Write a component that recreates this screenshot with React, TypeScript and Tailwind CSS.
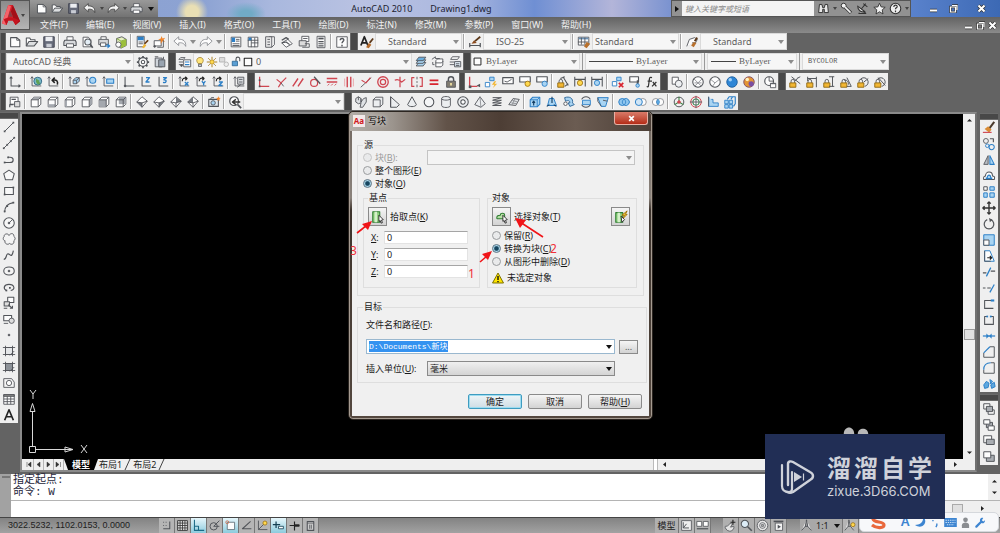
import React from "react";

type Shape = [d: string, stroke?: string, fill?: string, width?: number];

const K = "#515459";
const B = "#2b7fc7";
const L = "#a9d4f2";
const R = "#cf4550";
const Y = "#f2b632";
const G = "#8b8e92";
const W = "#fdfdfd";
const N = "none";

const circle = (x: number, y: number, r: number) =>
  `M${x - r} ${y}a${r} ${r} 0 1 0 ${2 * r} 0a${r} ${r} 0 1 0 ${-2 * r} 0z`;
const box = (x: number, y: number, w: number, h: number) => `M${x} ${y}h${w}v${h}h${-w}z`;

const UNDO = "M6.500 2L1 7l5.500 5V9c3-.5 6 0 8 4 .5-6-3-8.500-8-8z";
const REDO = "M9.500 2L15 7l-5.500 5V9c-3-.5-6 0-8 4-.5-6 3-8.500 8-8z";

const cube = (face: string): Shape[] => [
  ["M2.500 5.500l3-3h8v8l-3 3h-8z", K, W],
  [face, N, "#a4a8ae"],
  ["M2.500 5.500h8v8M10.500 5.500l3-3", K, N],
];
const iso = (face: string): Shape[] => [
  ["M8 2l6 5-6 7-6-6z", K, W],
  [face, N, "#777b81"],
  ["M2 8l6 1 6-2M8 9v5", K, N],
];
const axes: Shape = ["M3.500 2v10.500H14M2 4l1.500-2L5 4", K, N];
const lock: Shape[] = [
  ["M3.500 9V7a2 2 0 0 1 4 0v2", K, N],
  [box(2, 9, 7, 5), "#8c6510", Y],
];
const layers: Shape[] = [
  ["M2.500 12.500l3-4h8l-3 4z", K, L],
  ["M2.500 9.500l3-4h8l-3 4z", K, L],
  ["M2.500 6.500l3-4h8l-3 4z", K, "#6aaede"],
];
const sheet: Shape = ["M3.500 2.500h6l3 3v8h-9z", K, W];

const icons: Record<string, Shape[]> = {
  new: [["M3 3h7l3.500 3v7.500H3z", K, W, 1.2], ["M10 3v3h3.500", K, N]],
  open: [["M1.500 12.500v-9h4l1 2h5v2", K, W, 1.2], ["M1.500 12.500l3-5h10l-4 5z", K, "#dcdee0", 1.2]],
  save: [[box(2, 2, 12, 12), "#3b3f4c", "#666b7a"], [box(4, 2, 8, 5), N, "#eceef2"], [box(5, 10, 6, 4), N, "#c9ccd4"]],
  print: [["M4.500 6V2h7v4", K, W], ["M2 6h12l1 2v4H1V8z", K, "#d7d9dc", 1.2], [box(4, 10, 8, 4), K, W]],
  preview: [sheet, [circle(9, 8, 3.5), K, "#e3edf5", 1.2], ["M11.500 10.500l3 4", K, N, 2]],
  publish: [["M4.500 5V2h6v3", K, W], ["M2 5h11v6H2z", K, "#d7d9dc"], [box(4, 9, 6, 4), K, W], ["M9 12h3V9.500l3.500 3-3.500 3V13H9z", N, B]],
  dwf: [["M3 4l6-2 5 3v7l-6 3-5-3z", K, "#e7f1c2"], ["M3 4l5 3 6-2M8 7v7", "#77a133", N], ["M8 7l6-2v7l-6 3z", N, "#9cbf3c"], [circle(5, 11, 3), K, W]],
  match: [[box(2.5, 1.5, 8, 12), K, W], [box(3, 2, 7, 4), N, B], ["M4 8h5M4 10h5", K, N], ["M8 14l3-4 2 2-3 3z", N, Y], ["M11 10l4-4", "#6b3d14", N, 2]],
  block: [[box(2.5, 6.5, 8, 6), K, W], [circle(3, 13, 1), K, K], ["M11 1l1 3 3-1-2 3 2 2-3-1-2 3 0-4-3-1 3-1z", N, "#f0842a"], ["M13 6v8H6", K, N]],
  undo: [[UNDO, G, W]],
  redo: [[REDO, G, W]],
  undoL: [[UNDO, "#3e3e3e", "#f3f3f3"]],
  redoL: [[REDO, "#3e3e3e", "#f3f3f3"]],
  props: [[box(2.5, 2.5, 11, 11), K, W], [box(3, 3, 4, 5), N, B], ["M8 5h4M8 7h4M4 10h8M4 12h8", K, N]],
  center: [[box(2.5, 2.5, 11, 11), K, W], ["M2 6h12M6 3v11M10 3v11M6 9h8", K, N], [box(3, 3, 3, 3), N, B]],
  palette: [["M7 2h6v9l-3 3", K, W], [box(3, 2, 7, 12), K, "#e8e8e8"], ["M5 5h3M5 8h3M5 11h3", K, N]],
  sheets: [["M2 9l7-4 5 5-7 4z", K, W], ["M2 6l5-3 3 2M2 9l5-1 4 3", K, N, 1.4]],
  markup: [[box(5.5, 1.5, 8, 6), K, W], [box(2.5, 6.5, 8, 6), K, "#dcdcdc"], ["M9 10h5v4H6", K, N], ["M7 4h5", K, N]],
  calc: [[box(3.5, 1.5, 9, 13), K, W], [box(5, 3, 6, 2), N, K], ["M5 7.500h6M5 10h6M5 12.500h6", K, N, 1.3]],
  help: [[box(2, 2, 12, 12), K, W], ["M6 6c0-3 4.500-2.500 4 0-.5 1.500-2 1.500-2 3.500M8 11v2", K, N, 1.6]],
  textstyle: [["M1 12L5 2l4 10M2.500 9h5", "#222", N, 2], ["M7 14l3-5 3 2-3 4z", N, "#b56a2a"], ["M11 9l4-5", "#5b3718", N, 2]],
  dimstyle: [["M2 9v5M14 9v5M2 12h12", K, N, 1.4], ["M4 10l3-4 3 3z", N, "#8c4a1c"], ["M8 7l6-5", "#5b3718", N, 2]],
  tablestyle: [[box(1.5, 2.5, 12, 9), K, W], [box(2, 3, 11, 2), N, "#6c93b8"], ["M1 8h12M5 3v8M9 3v8", K, N], ["M8 13l3-5 4 2-4 5z", N, "#b8702c"]],
  mleader: [["M2 13l3-8 6-2 3 2-2 4H8", K, W], ["M7 12l3-4 3 1-3 5z", N, "#b8702c"], ["M11 7l3-4", "#5b3718", N, 2]],
  gear: [[circle(8, 8, 5), K, W, 1.4], [circle(8, 8, 2), K, W, 1.2], ["M8 1v2M8 13v2M1 8h2M13 8h2M3 3l1.500 1.500M11.500 11.500L13 13M3 13l1.500-1.500M11.500 4.500L13 3", K, N, 2]],
  workspace: [[box(2.5, 3.5, 8, 10), K, "#cfd4da"], [box(6.5, 5.5, 7, 8), K, "#9aa5b1"], ["M2 2h4M12 2v3", K, N]],
  layerprops: [["M1 5l2-2h5l-2 2zM1 8h5M1 11h5", K, W], [box(6.5, 5.5, 8, 8), K, W], ["M8 8h5M8 11h5", B, N, 1.3], [circle(4, 12, 1), K, K]],
  bulb: [["M5.500 10C2 6 4 2 8 2s6 4 2.500 8z", "#9a7a24", "#ffe47a"], [box(6, 11, 4, 3), K, "#ccc"]],
  sun: [[circle(8, 8, 3), "#a07515", "#ffd84d"], ["M8 1v3M8 12v3M1 8h3M12 8h3M3 3l2 2M11 11l2 2M3 13l2-2M11 5l2-2", "#a07515", N, 1.2]],
  vp: [[box(2, 2, 7, 6), "#a8a8a8", "#ddd"], [circle(11, 11, 3), "#a8a8a8", "#eee"]],
  unlock: [["M8 7V4a2.500 2.500 0 0 1 5 0v3", K, N, 1.4], [box(3, 7, 7, 6), "#24608f", "#5a9fd4"]],
  square: [[box(3, 3, 10, 10), "#222", W, 1.4]],
  layers,
  layerprev: [["M5.500 6.500l2-2h6v7l-2 2h-6z", K, W], ["M5 9h7l2-2M1 5l4-3v2h5M2 8v3h2", K, N]],
  layerstate: [["M3 5l2-3h8l-2 3zM2 8h5M2 11h5", K, W], [box(7.5, 7.5, 7, 6), K, "#dfe9f2"], ["M9 10h4M9 12h4", K, N]],
  ucs: [["M3.500 2v10.500H14M2 4l1.500-2L5 4M12 11l2 1.500-2 1.500", K, N, 1.2]],
  world: [axes, [circle(10, 7, 4.5), "#2a6280", "#79b9c8"], ["M8 4l3 2 2 4-3 1-2-3z", N, "#5fa055"]],
  ucsprev: [axes, ["M13 11c1-4-1-6-5-5M10 3L7 6l3 3", "#222", N, 1.8]],
  ucsface: [axes, ["M7 6l3-3h4v4l-3 3H7z", K, L], ["M7 6h4v4M11 6l3-3", K, N]],
  ucsobj: [axes, [circle(10, 6, 3.5), B, L, 1.2]],
  ucsview: [axes, [box(6.5, 4.5, 8, 5), B, L, 1.2]],
  ucsorigin: [["M3.500 2v10.500H14", K, N, 1.2], [circle(3.5, 12.5, 1), K, K]],
  ucsz: [["M3.500 2v10.500H14", K, N, 1.2], ["M8 3h4l-4 5h4", B, N, 1.6]],
  ucs3: [["M3.500 2v10.500H14", K, N, 1.2], ["M8 3h4l-3 2.500c4 0 3 4-1 3", B, N, 1.5]],
  ucsX: [axes, ["M6 7C6 4 8 3 11 4M9.500 2l2 2-2 2", "#222", N, 1.3], ["M9 8l4 4M13 8l-4 4", B, N, 1.5]],
  ucsY: [axes, ["M6 7C6 4 8 3 11 4M9.500 2l2 2-2 2", "#222", N, 1.3], ["M9 7l2 2.500L13 7M11 9v3", B, N, 1.5]],
  ucsZ: [axes, ["M6 7C6 4 8 3 11 4M9.500 2l2 2-2 2", "#222", N, 1.3], ["M9 8h4l-4 4h4", B, N, 1.5]],
  ucsapply: [axes, [box(6.5, 2.5, 7, 8), K, "#dadde0"], ["M8 5h4M8 8h4M6 14l4-3", K, N]],
  coinc: [["M3 2v11h11", R, N, 1.4], [box(2, 12, 2, 2), N, K], [box(2, 5, 2, 2), N, K]],
  perp: [["M3 5l5 4 6-6M8 9l-3 5", R, N, 1.4], ["M8 9l3 4", K, N]],
  para: [["M2 13L8 4M8 13l6-9", R, N, 1.6]],
  tang: [[circle(7, 9, 4), R, N, 1.4], ["M7 2l7 8", K, N, 1.4]],
  horiz: [["M2 4h12M2 8h12", R, N, 1.5], ["M3 12l2-2M7 12l2-2M11 12l2-2", R, N]],
  vert: [["M6 2v12M10 2v12", R, N, 1.6], ["M3 4v9M13 4v9", "#e9a0a5", N]],
  coll: [["M2 14L14 3", K, N], ["M3 6l5 3 5-6", R, N, 1.3]],
  conc: [[circle(8, 8, 6), R, N, 1.5], [circle(8, 8, 3), R, N, 1.4]],
  smooth: [["M2 6c4-2 6 0 8 2l4-3M8 2v12", R, N, 1.4]],
  sym: [["M5 3H2v10h3M11 3h3v10h-3", R, N, 1.4], ["M8 2v3M8 7v2M8 11v3", K, N]],
  equal: [["M3 6h10M3 10.500h10", "#d8242f", N, 2]],
  fix: [["M5 7V5a3 3 0 0 1 6 0v2", K, N, 1.6], [box(3, 7, 10, 7), K, "#807b70"], [box(7, 9, 2, 3), N, "#f2e3a3"]],
  autocon: [["M3 2v11h9", R, N, 1.5], [box(2, 12, 3, 3), N, K], ["M11 12l4 2v-4z", N, K]],
  autocon2: [[box(6.5, 2.5, 5, 4), B, L], [box(1.5, 8.5, 5, 5), B, W], ["M12 7l-3 4h3l-2 4 5-5h-3l2-3z", N, Y]],
  showcon: [[box(2, 3, 12, 7), K, W, 1.3], ["M4 7l3 1 5-3", K, N]],
  showall: [[box(2, 2, 12, 6), K, W, 1.3], [circle(11, 10, 3), "#a07515", "#ffd84d"]],
  hideall: [[box(2, 2, 12, 6), K, W, 1.3], [circle(11, 10, 3), B, L]],
  lin: [...lock, ["M8 2l6 10M5 4l5-2M10 13l4-3", K, N, 1.2]],
  dimshow: [["M2 2v11M14 2v11M2 5h12", K, N, 1.2], [circle(8, 9, 3), "#a07515", "#ffd84d"]],
  dimhide: [["M2 2v11M14 2v11M2 5h12", K, N, 1.2], [circle(8, 9, 3), B, L]],
  delcon: [[box(6.5, 2.5, 5, 4), B, L], [box(1.5, 7.5, 5, 5), B, W], ["M9 9l5 5M14 9l-5 5", "#d8242f", N, 2]],
  consettings: [[box(2, 2, 10, 6), K, W, 1.3], ["M11 6v5", K, N, 2], [circle(11, 12, 2), B, L]],
  fx: [["M8 3c-2-1-3 0-3 2L4 12c0 2-1 2-2 1M3 7h5M9 8l4 5M13 8l-5 5", "#333", N, 1.4]],
  vs2d: [[box(2.5, 2.5, 7, 8), K, W], [circle(10, 10, 4), K, "#eef0f2"]],
  vswire: [[circle(8, 8, 6), K, W, 1.2], ["M3 4l5 5 5-5M8 9l-4 4M8 9l4 4M4 9h8", G, N]],
  vshide: [[circle(8, 8, 6), K, W, 1.2], ["M3 5l5 4 5-4M8 9l-3 4", G, N]],
  vsreal: [[circle(8, 8, 6), "#1d5e9c", "#2e86d6"], [circle(6, 5.5, 2), N, "#9fd0f7"]],
  vsconc: [[circle(8, 8, 6), "#7c4a63", "#e49534"], [circle(10.5, 10, 3), N, "#7a4fa3"], [circle(6, 5, 2), N, "#fff0c0"]],
  vsmgr: [[circle(7, 7, 5), K, W, 1.3], ["M7 7h5M7 7V2", K, N], [box(8.5, 9.5, 6, 5), K, W], [box(8.5, 9.5, 6, 1), N, K]],
  daligned: [...lock, ["M4 2l10 8M10 4l4-2M8 7l3-3", K, N, 1.1]],
  dhoriz: [...lock, ["M3 2v5M13 2v12M3 4h10", K, N, 1.1]],
  dvert: [...lock, ["M8 2h6M8 13h6M12 2v11", K, N, 1.1]],
  dang: [...lock, ["M9 3l5 10H9M6 6c3-1 5 2 5 5", K, N, 1.1]],
  drad: [...lock, ["M5 5a5 5 0 1 1 5 8M9 8l5-4", K, N, 1.1]],
  ddia: [...lock, ["M5 5a5 5 0 1 1 5 8M6 3l8 9", K, N, 1.1]],
  named: [[box(2.5, 2.5, 9, 8), K, W], [box(7.5, 7.5, 6, 6), K, "#ddd"], ["M2 14v-3h4M4 5h5", K, N, 1.3]],
  vtop: cube("M2.500 5.500l3-3h8l-3 3z"),
  vbottom: cube("M2.500 10.500h8v3h-8z"),
  vleft: cube("M2.500 5.500h2v8h-2z"),
  vright: cube("M10.500 5.500l3-3v8l-3 3z"),
  vfront: cube("M2.500 5.500h8v8h-8z"),
  vback: cube("M5.500 2.500h8v8h-8z"),
  isosw: iso("M2 8l6 1v5z"),
  isose: iso("M8 9l6-2-6 7z"),
  isone: iso("M8 2l6 5-6 2z"),
  isonw: iso("M8 2l0 7-6-1z"),
  camera: [[box(2, 5, 11, 8), K, "#dfe7ee", 1.2], [circle(7, 9, 2.5), K, L], ["M4 5l1-2h3", K, N], ["M13 1l.7 2 2 .5-1.500 1.200.5 2-1.700-1-1.700 1 .5-2L10.500 3.500l2-.5z", N, "#f0842a"]],
  zoomprev: [[circle(7, 7, 5), K, W, 1.4], ["M11 11l4 4", K, N, 2], ["M14 8H6M9 5L5 8l4 3", "#333", N, 1.6]],
  polysolid: [["M2 4l3-2 3 2v4l3-4 3-1v5l-4 6H7l1-5-3 1-3-2z", K, "#dfe2e5"], ["M5 6V2M8 4v5", K, N]],
  boxs: [["M2.500 5.500l3-3h8v8l-3 3h-8z", K, "#eceef0"], ["M2.500 5.500h8v8", K, N]],
  wedge: [["M3 2l10 9-3 3H3z", K, "#eceef0", 1.1], ["M3 2v12", K, N]],
  cone: [["M8 2l5 9c-1 3-9 3-10 0z", K, "#eceef0", 1.1]],
  sphere: [[circle(8, 8, 5.5), K, "#f4f5f6", 1.2]],
  cyl: [["M3 4c0-3 10-3 10 0v8c0 3-10 3-10 0z", K, "#eceef0"], ["M3 4c0 2.500 10 2.500 10 0", K, N]],
  torus: [[circle(8, 8, 6), K, "#eceef0", 1.2], [circle(8, 8, 2.5), K, W, 1.2]],
  pyramid: [["M8 2l6 8-5 4-7-3z", K, "#eceef0"], ["M8 2l1 12", G, N]],
  helix: [["M3 3h10L3 6h10L3 9h10L3 12h10", K, N, 1.1]],
  planar: [["M2 11l5-7 7 1-4 7z", K, "#dfe2e5"], ["M5 9l6 1M6 6l6 2M9 4l-3 7", G, N]],
  extrude: [["M2.500 5.500l3-3h8v8l-3 3h-8z", B, L, 1.2], ["M2.500 5.500h8v8M10.500 5.500l3-3", B, N], ["M6.500 12V7M5 9l1.500-2L8 9", "#123d63", N, 1.3]],
  presspull: [["M3 12l2-8h5l3 8z", B, L, 1.1], ["M2 13l3-2M8 2v7M13 13l-3-2", "#123d63", N, 1.3]],
  sweep: [["M3 3c6-2 10 1 9 6l2 2-5 2-2-4h2C9 6 7 6 4 7z", "#235f93", L], [circle(4, 10, 2), K, W]],
  revolve: [["M3 5c2-4 8-4 10 0M3 11c2 4 8 4 10 0", K, N, 1.2], [box(4, 6, 9, 5), B, L]],
  loft: [["M2 3h12l-3 10H6z", B, L, 1.1], ["M2 3v4l4 6M8 6l5 1", K, N]],
  union: [["M6 4a4 4 0 1 0 0 8 4 4 0 0 0 2-.6 4 4 0 1 0 0-6.800A4 4 0 0 0 6 4z", B, "#8fc6ee", 1.1], ["M8 4.600c2.500 2 2.500 5 0 6.800M8 4.600c-2.500 2-2.500 5 0 6.800", B, N]],
  subtract: [[circle(10, 8, 4), G, W], [circle(5.5, 8, 4), B, "#cfe5f6", 1.1]],
  intersect: [[circle(5.5, 8, 4), G, W], [circle(10.5, 8, 4), G, W], ["M8 5c-2 2-2 4 0 6 2-2 2-4 0-6z", B, "#6ab4e8"]],
  orbit: [[circle(8, 8, 5.5), K, N, 1.1], ["M8 2v6l5 3M8 8l-5 3", "#3a7e3f", N, 1.2], [circle(8, 8, 1.5), R, R]],
  swivel: [[circle(8, 8, 6), R, N, 1.1], [circle(8, 8, 3.5), "#418a57", W, 1.2], ["M8 1v14M1 8h14", K, N]],
  align3: [["M3 2v11h11V9H8V5H6", B, L], ["M3 2v11", K, N]],
  array3: [[box(2, 6, 4, 4), B, L], [box(7, 6, 4, 4), B, L], [box(2, 11, 4, 4), B, L], [box(7, 11, 4, 4), B, L], ["M5 5l2-3h7v8l-2 3M9 5l2-3", B, N, 1.3]],
  line: [["M3 13L13 3", K, N, 1.1], [box(2, 12, 2, 2), N, K], [box(12, 2, 2, 2), N, K]],
  xline: [["M2 14L14 2", K, N, 1.1], [box(5, 9, 2, 2), N, K], [box(9, 5, 2, 2), N, K], [box(1, 13, 2, 2), N, K], [box(13, 1, 2, 2), N, K]],
  pline: [["M3 12h6c5 0 5-6 0-6H7", K, N, 1.3], [box(2, 11, 2, 2), N, K], [box(6, 5, 2, 2), N, K]],
  polygon: [["M8 2.500l6 4-2 7H4l-2-7z", K, "#f8f8f8", 1.2]],
  rect: [[box(3, 4, 10, 8), K, "#f8f8f8", 1.2], [box(2, 11, 2, 2), N, K], [box(12, 3, 2, 2), N, K]],
  arc: [["M3 14c0-6 3-10 10-11", K, N, 1.2], [box(2, 12, 2, 2), N, K], [box(12, 2, 2, 2), N, K], [box(5, 6, 2, 2), N, K]],
  circle: [[circle(8, 8, 6), K, "#f8f8f8", 1.2], ["M8 8l4-4", K, N], [circle(8, 8, 1), K, K]],
  cloud: [["M8 4c-1-3-6-2-5.500 1-2 2-1 5 1 5-1 4 4 5 5 3 2 2 6 1 5-3 2-1 2-4 0-5 .5-4-4-4-5.500-1z", K, "#f4f4f4"]],
  spline: [["M2 13c4 0 2-8 6-6 3 3 4 1 5-4", K, N, 1.3]],
  ellipse: [["M2 8c0-6 12-6 12 0s-12 6-12 0z", K, "#f4f4f4", 1.2], [circle(8, 8, 1), K, K]],
  earc: [["M5 12C1 10 2 5 8 5s8 6 2 7", K, N, 1.3], [box(4, 11, 2, 2), N, K], [box(8, 8, 2, 2), N, K]],
  insert: [[box(6.5, 1.5, 7, 6), K, W, 1.2], [box(2.5, 6.5, 6, 5), K, "#ddd", 1.2], ["M7 10l5 4M12 11v3h-3M2 14h4", K, N, 1.2]],
  mkblock: [[box(2, 4, 9, 6), K, W, 1.2], [circle(11, 10, 3), K, "#ddd"], ["M2 13h5", K, N]],
  point: [[circle(8, 8, 1), K, K]],
  hatch: [[box(4, 4, 8, 8), K, "#e4e6e8"], ["M1 4h14M4 2v12M12 2v12M1 12h14M9 13l5-5", K, N]],
  gradient: [[box(4, 4, 8, 8), K, "#8d9298"], ["M1 4h14M4 2v12M12 2v12M1 12h14M9 13l5-5", K, N]],
  region: [["M2 3h9l3 4v6H2z", K, "#f4f4f4"], [circle(8, 8, 3), K, W]],
  table: [[box(2, 3, 12, 11), K, W], [box(2, 3, 12, 2), K, "#888"], ["M2 8h12M2 11h12M6 5v9M10 5v9", K, N]],
  text: [["M3 14L8 2l5 12M5 10h6", "#222", N, 1.9]],
  erase: [["M8 9l6-8", "#4b3b2d", N, 2.4], ["M3 9l4-3 4 4-3 3z", N, "#d98c35"], ["M1 13h10", R, N, 1.3]],
  copy: [[circle(4.5, 4.5, 2.8), K, N], [circle(11, 11.5, 3), B, N, 1.2], [circle(6, 10, 2), B, N], ["M9 2h4v4", K, N, 1.3]],
  mirror: [["M7 3v10H2z", K, "#b9bec4"], ["M9 3v10h5z", B, L, 1.2]],
  offset: [["M2 12c-1-3 1-4 2-4 0-6 8-6 8 0 2 0 3 1 2 4z", K, W, 1.2], ["M5 11c-1-1 0-1 1-1 0-4 4-4 4 0 1 0 2 0 1 1z", B, L, 1.2]],
  array: [[box(2, 2, 4, 4), K, W, 1.1], [box(9, 2, 5, 4), B, L, 1.1], [box(2, 9, 4, 5), B, L, 1.1], [box(9, 9, 5, 5), B, L, 1.1]],
  move: [["M8 1v14M1 8h14M6 3l2-2 2 2M6 13l2 2 2-2M3 6L1 8l2 2M13 6l2 2-2 2", "#333", N, 1.6]],
  rotate: [["M10 3a5.500 5.500 0 1 1-4 0", K, N, 1.4], ["M8 1l4 2-3 3z", N, K]],
  scale: [[box(2, 2, 12, 12), B, L, 1.1], [box(2, 8, 6, 6), K, W, 1.1]],
  stretch: [["M3 2h6l5 12H3z", B, W, 1.1], ["M3 2v12h7", K, N], ["M6 10h5M9 8l2 2-2 2", "#222", N, 1.4]],
  trim: [["M1 9h4M10 7h5", K, N, 1.3], ["M5 13L10 3", B, N, 1.4]],
  extend: [["M1 8h3M6 8h4", K, N, 1.3], ["M9 13l5-9", B, N, 1.4]],
  breakpt: [["M12 4H3v9h10", K, N, 1.2], ["M10 4h4", B, N, 2.4]],
  breakat: [["M6 4H3v9h10V4h-3", K, N, 1.2], [box(5, 3, 2, 2), N, B], [box(9, 3, 2, 2), N, B]],
  join: [["M1 8h14", B, N, 1.4], ["M5 5l3 3-3 3zM11 5L8 8l3 3z", N, B]],
  chamfer: [["M2 14V9M9 2h5v12H2", K, N, 1.1], ["M2 9l7-7", B, N, 1.3]],
  fillet: [["M2 14V10M10 2h4v12H2", K, N, 1.1], ["M2 10c0-5 3-8 8-8", B, N, 1.3]],
  explode: [["M2 9l3-4 3 2-1 5-4 1zM9 3l3 2-2 3zM10 9l4-3 1 5-4 2z", B, "#5da7df", 1.1]],
  front: [[box(2, 2, 7, 6), K, W, 1.1], [box(7, 9, 7, 5), K, W, 1.1], [box(5, 5, 7, 6), K, "#a9adb2", 1.1]],
  back: [[box(5, 5, 7, 6), K, "#a9adb2", 1.1], [box(2, 2, 7, 5), K, W, 1.1], [box(7, 9, 7, 5), K, W, 1.1]],
  above: [[box(2, 2, 9, 8), K, W, 1.1], [box(5, 6, 9, 6), K, "#a9adb2", 1.1]],
  under: [[box(5, 6, 9, 7), K, "#a9adb2", 1.1], [box(2, 2, 8, 7), K, W, 1.1]],
  snap: [["M4 12h8V3", K, N, 1.3], ["M4 4h1M7 4h1M4 8h1M7 8h1", K, N, 1.3]],
  grid: [[box(2, 2, 12, 12), "#222", "#e6e6e6"], ["M5 2v12M8 2v12M11 2v12M2 5h12M2 8h12M2 11h12", "#333", N]],
  ortho: [["M3 1v13h12M3 9h5v5", "#1c6b87", N, 1.3]],
  polar: [[circle(7, 9, 4.5), K, N, 1.2], ["M7 9l7-7M7 9h7", K, N, 1.2]],
  osnap: [[box(4, 4, 9, 9), "#5a6a72", W], [circle(4, 4, 1.8), "#c96b4a", N]],
  otrack: [["M13 3L3 12h11", K, N, 1.3]],
  ducs: [["M3 2v11h11M3 13l7-7", K, N, 1.1], [circle(11, 5, 2.5), "#a07515", "#ffd84d"]],
  dyn: [["M1 7h9M5 3v8", "#143f52", N, 1.5], [box(8, 9, 6, 3), "#143f52", W]],
  lwt: [["M2 8h12M8 3v11", "#222", N, 1.4], ["M8 8h6", "#222", N, 3]],
  qp: [[box(4, 3, 8, 11), K, "#ccc", 1.3], ["M4 5h8M7 7v5M9 7v5", K, N]],
  layout: [[box(2, 2, 12, 12), K, "#eee"], ["M4 4v7h7M4 11l4-5", K, N, 1.2]],
  quickview: [[box(1, 3, 6, 6), K, W], [box(9, 3, 6, 6), K, W], ["M1 12h14", K, N, 1.5]],
  pan: [["M4 14c-4-4-3-6 0-5l4-4 2 2-2 3 4-1c1 3-2 6-5 6z", K, "#e3e3e3"], ["M11 1v6M8 4h6", "#222", N, 1.4]],
  zoom: [[circle(6, 6, 4.5), K, "#dcecf6", 1.3], ["M9.500 9.500l5 5", K, N, 2]],
  wheel: [[circle(8, 8, 6.5), K, "#e6e6e6"], [circle(8, 8, 3.5), K, W], [circle(8, 8, 1.5), K, "#aaa"]],
  motion: [[box(4, 5, 9, 9), K, "#f3f3f3"], ["M2 3h12", K, N, 2], ["M7 7v5l4-2.500z", N, K]],
  anno: [["M8 1L6.500 9 2 14M8 1l1.500 8L14 14M6 9h4", K, "#eee", 1.2]],
  annov: [["M6 1L5 9l-4 5M6 1l2 8 4 5M5 9h3", K, "#eee", 1.1], [circle(11, 7, 2.5), "#a07515", "#ffd84d"]],
  binoc: [["M2 13l1-10h3l1 4h2l1-4h3l1 10H9v-4H7v4z", "#333", "#e8e8e8", 1.2]],
  key: [[circle(4.5, 4.5, 3), "#333", "#f2f2f2", 1.2], ["M6.500 6.500l7 7", "#333", N, 4], ["M6 6l7 7", "#f2f2f2", N, 2]],
  sat: [["M2 5c0 5 4 8 9 7zM7 8l5-6M9 2l5 4M3 14h9l-3-3", "#333", "#eee", 1.3]],
  star: [["M8 1.500l2 4.500 5 .5-3.700 3.200 1 5L8 12l-4.300 2.700 1-5L1 6.500 6 6z", "#333", "#f2f2f2", 1.1]],
  qhelp: [[circle(8, 8, 6.5), "#333", "#eee", 1.3], ["M6 6c0-3 4.500-2.500 4 0-.5 1.500-2 1-2 3M8 10.500v2", "#333", N, 1.5]],
  pick: [[box(2, 2, 8, 12), "#2f7d32", "#8ccf7c", 1.2], [box(4, 2, 3, 12), N, "#d5f0c9"], ["M9 6l5 5-2 .5 1 3-1.500.5-1-3L9 13z", "#222", W]],
  select: [["M2 9c0-3 3-3 4-3 0-3 5-3 5 0v4H4c-1 0-2 0-2-1z", "#2f7d32", "#b7e0a6", 1.2], ["M9 6l5 5-2 .5 1 3-1.500.5-1-3L9 13z", "#222", W]],
  quick: [[box(2, 3, 8, 11), "#2f7d32", "#8ccf7c", 1.2], [box(4, 3, 3, 11), N, "#d5f0c9"], ["M15 1l-6 5h3l-2 4 5-5h-2z", "#9a6c00", "#ffd23d"], ["M8 7l4 4-3 3z", "#222", W]],
};

function Icon({ name, className = "size-[14px]" }: { name: string; className?: string }) {
  return (
    <svg viewBox="0 0 16 16" className={`${className} shrink-0`} aria-hidden="true">
      {(icons[name] ?? []).map(([d, stroke = K, fill = N, w = 1], i) => (
        <path key={i} d={d} stroke={stroke} fill={fill} strokeWidth={w} strokeLinejoin="round" />
      ))}
    </svg>
  );
}

function Caret({ dark = false }: { dark?: boolean }) {
  return (
    <svg viewBox="0 0 6 4" className="mx-[2px] h-[4px] w-[6px] shrink-0" aria-hidden="true">
      <path d="M0 0h6L3 4z" fill={dark ? "#111" : "#8c8c8c"} />
    </svg>
  );
}

function SmallCaret() {
  return (
    <svg viewBox="0 0 4 3" className="h-[3px] w-[4px] shrink-0" aria-hidden="true">
      <path d="M0 0h4L2 3z" fill="#444" />
    </svg>
  );
}

function ToolButtons({ items }: { items: string }) {
  return (
    <>
      {items.split(" ").map((it, i) =>
        it === "|" ? (
          <span key={i} className="mx-[1px] h-[15px] w-[2px] shrink-0 border-r border-white bg-[#a5a5a5]" />
        ) : it === "v" ? (
          <span key={i} className="flex w-[9px] shrink-0 justify-center">
            <Caret />
          </span>
        ) : (
          <button key={i} type="button" aria-label={it} className="flex h-[17px] w-[17px] shrink-0 items-center justify-center">
            <Icon name={it} />
          </button>
        ),
      )}
    </>
  );
}

function Bar({ children, first = false }: { children: React.ReactNode; first?: boolean }) {
  return (
    <div className="flex h-[17px] shrink-0 items-center bg-[#efefef]">
      <span className={`${first ? "w-[6px]" : "w-[8px]"} h-full shrink-0 border-x border-[#6a6a6a] bg-[#484848]`} />
      {children}
    </div>
  );
}

function Combo({
  label,
  value,
  width,
  children,
  text = "pl-[12px] text-[9px]",
}: {
  label: string;
  value: string;
  width: string;
  children?: React.ReactNode;
  text?: string;
}) {
  return (
    <span className={`flex h-[17px] shrink-0 items-center border border-[#dadada] bg-[#f6f6f6] ${width}`}>
      {children}
      <select aria-label={label} className={`h-full min-w-0 flex-1 appearance-none bg-transparent text-[#5c5c5c] ${text}`}>
        <option>{value}</option>
      </select>
      <Caret />
    </span>
  );
}

const MONO = "font-['Liberation_Mono','Noto_Sans_CJK_SC',monospace]";
const MONO_TEXT = "pl-[5px] text-[7px] font-['Liberation_Mono','Noto_Sans_CJK_SC',monospace]";
const SERIF_TEXT = "pl-[3px] text-[9px] font-['Liberation_Serif','Noto_Sans_CJK_SC',serif]";

function Header() {
  const menus = ["文件(F)", "编辑(E)", "视图(V)", "插入(I)", "格式(O)", "工具(T)", "绘图(D)", "标注(N)", "修改(M)", "参数(P)", "窗口(W)", "帮助(H)"];
  return (
    <header className="flex h-[33px] shrink-0 bg-[#7d7d7d]">
      <button type="button" aria-label="Application menu" className="flex h-[30px] w-[30px] shrink-0 items-center border border-[#555] bg-linear-to-b from-[#8b8b8b] to-[#b5b5b5]">
        <svg viewBox="0 0 22 28" className="h-[28px] w-[20px]" aria-hidden="true">
          <path d="M8 3h5l8 18-5 4-3-5H8l-2 5-5-2z" fill="#d8202a" />
          <path d="M8 3l3 1-6 21-4-2z" fill="#f4636a" />
          <path d="M13 3l8 18-5 4-5-15z" fill="#a30f18" />
          <path d="M10 9l3 7H8z" fill="#8d3c40" />
          <path d="M3 19c6-4 11-2 17 1l-4 5-3-5H8l-2 5z" fill="#c4141f" />
        </svg>
        <SmallCaret />
      </button>
      <div className="flex min-w-0 flex-1 flex-col">
        <div className="flex h-[17px] items-center bg-[radial-gradient(ellipse_16px_16px_at_162px_12px,#e9dfb4_40%,transparent_100%),radial-gradient(ellipse_20px_12px_at_216px_14px,#71abc6_30%,transparent_100%),linear-gradient(90deg,#8aa0cf_0%,#8da3d3_18%,#a9b8de_25%,#b9c2e2_34%,#aab7df_45%,#6f8fd3_52%,#b3b5d9_60%,#7b93d0_66%,#5c84ce_90%,#3c69b4_100%)]">
          <div className="flex h-full w-[128px] shrink-0 items-center justify-between bg-linear-to-b from-[#999] to-[#737373] pr-[2px] pl-[5px]">
            {["new", "open", "save", "undoL", "v", "redoL", "v", "print"].map((n, i) =>
              n === "v" ? (
                <SmallCaret key={i} />
              ) : (
                <button key={i} type="button" aria-label={n}>
                  <Icon name={n} className="size-[13px]" />
                </button>
              ),
            )}
            <Caret dark />
          </div>
          <h1 className="flex flex-1 justify-center gap-[18px] pl-[14px] text-[9px] leading-[16px] text-[#1c2230]">
            <span>AutoCAD 2010</span>
            <span>Drawing1.dwg</span>
          </h1>
          <div className="flex h-full w-[240px] shrink-0 items-center gap-[3px] border border-[#555] bg-[#929292] pl-[3px]">
            <svg viewBox="0 0 4 6" className="h-[6px] w-[4px]" aria-hidden="true">
              <path d="M0 0l4 3-4 3z" fill="#111" />
            </svg>
            <input aria-label="Search" placeholder="键入关键字或短语" className="h-[15px] w-[132px] shrink-0 bg-[#f4f4f4] pl-[3px] text-[8px] italic placeholder:text-[#8a8a8a]" />
            <div className="flex flex-1 items-center justify-between pr-[1px]">
              <Icon name="binoc" className="size-[13px]" />
              <SmallCaret />
              <Icon name="key" className="size-[13px]" />
              <Icon name="sat" className="size-[13px]" />
              <Icon name="star" className="size-[13px]" />
              <Icon name="qhelp" className="size-[13px]" />
              <SmallCaret />
            </div>
          </div>
          <div className="flex h-full w-[89px] shrink-0 items-center pl-[18px]">
            <WindowButtons gap="gap-[11px]" lastGap="pl-[8px]" />
          </div>
        </div>
        <div className="flex h-[16px] items-center bg-linear-to-b from-[#636363] to-[#8b8b8b]">
          <nav className="flex flex-1 gap-[18px] pl-[10px] text-[9px] leading-[14px] text-[#f0f0f0]">
            {menus.map((m) => (
              <a key={m} href="#menu">
                {m}
              </a>
            ))}
          </nav>
          <div className="pr-[3px]">
            <WindowButtons gap="gap-[3px]" lastGap="pl-0" />
          </div>
        </div>
      </div>
    </header>
  );
}

function WindowButtons({ gap, lastGap }: { gap: string; lastGap: string }) {
  return (
    <div className={`flex items-center ${gap}`}>
      <button type="button" aria-label="Minimize">
        <svg viewBox="0 0 9 9" className="size-[9px]">
          <path d="M1 6.500h7" stroke="#333" strokeWidth="3.500" />
          <path d="M1 6.500h7" stroke="#fff" strokeWidth="2" />
        </svg>
      </button>
      <button type="button" aria-label="Restore">
        <svg viewBox="0 0 9 9" className="size-[9px]">
          <path d="M3 1.500h5V6M1.500 3h5v5h-5z" stroke="#333" strokeWidth="2.500" fill="none" />
          <path d="M3 1.500h5V6M1.500 3h5v5h-5z" stroke="#fff" strokeWidth="1.200" fill="none" />
        </svg>
      </button>
      <button type="button" aria-label="Close" className={lastGap}>
        <svg viewBox="0 0 9 9" className="size-[9px]">
          <path d="M1.500 1.500l6 6M7.500 1.500l-6 6" stroke="#333" strokeWidth="3.500" />
          <path d="M1.500 1.500l6 6M7.500 1.500l-6 6" stroke="#fff" strokeWidth="2" />
        </svg>
      </button>
    </div>
  );
}

function Line({ w }: { w: string }) {
  return <span className={`ml-[3px] h-px shrink-0 bg-[#444] ${w}`} />;
}

function MiniGrip() {
  return <span className="h-[17px] w-[5px] shrink-0 border-x-2 border-[#efefef] bg-[#999]" />;
}

function Toolbars() {
  return (
    <div className="flex shrink-0 flex-col gap-[3px] overflow-hidden">
      <div className="flex">
        <Bar first>
          <ToolButtons items="new open save | print preview publish dwf | match block | undo v redo v | props center palette sheets markup calc | help" />
        </Bar>
        <Bar>
          <ToolButtons items="textstyle" />
          <Combo label="Text style" value="Standard" width="w-[87px]" />
          <ToolButtons items="| dimstyle" />
          <Combo label="Dimension style" value="ISO-25" width="w-[88px]" />
          <ToolButtons items="| tablestyle" />
          <Combo label="Table style" value="Standard" width="w-[87px]" text="pl-[2px] text-[9px]" />
          <ToolButtons items="| mleader" />
          <Combo label="Multileader style" value="Standard" width="w-[87px]" />
        </Bar>
      </div>
      <div className="flex">
        <Bar first>
          <Combo label="Workspace" value="AutoCAD 经典" width="w-[128px]" text="pl-[6px] text-[9px]" />
          <ToolButtons items="gear workspace" />
        </Bar>
        <Bar>
          <ToolButtons items="layerprops" />
          <Combo label="Layer" value="0" width="w-[219px]" text="pl-[2px] text-[9px]">
            {["bulb", "sun", "vp", "unlock", "square"].map((n) => (
              <Icon key={n} name={n} className="size-[12px]" />
            ))}
          </Combo>
          <ToolButtons items="layers layerprev layerstate" />
        </Bar>
        <Bar>
          <Combo label="Color" value="ByLayer" width="w-[109px]" text={SERIF_TEXT}>
            <Icon name="square" className="size-[11px]" />
          </Combo>
          <MiniGrip />
          <Combo label="Linetype" value="ByLayer" width="w-[117px]" text={SERIF_TEXT}>
            <Line w="w-[44px]" />
          </Combo>
          <MiniGrip />
          <Combo label="Lineweight" value="ByLayer" width="w-[90px]" text={SERIF_TEXT}>
            <Line w="w-[25px]" />
          </Combo>
          <MiniGrip />
          <Combo label="Plot style" value="BYCOLOR" width="w-[87px]" text={MONO_TEXT} />
        </Bar>
      </div>
      <div className="flex">
        <Bar first>
          <ToolButtons items="ucs | world ucsprev | ucsface ucsobj ucsview | ucsorigin ucsz ucs3 | ucsX ucsY ucsZ | ucsapply" />
        </Bar>
        <Bar>
          <ToolButtons items="coinc perp para tang horiz vert coll conc smooth sym equal fix" />
        </Bar>
        <Bar first>
          <ToolButtons items="autocon autocon2 showcon showall hideall | lin dimshow dimhide | delcon consettings fx" />
        </Bar>
        <Bar>
          <ToolButtons items="vs2d | vswire vshide vsreal vsconc | vsmgr" />
        </Bar>
        <Bar>
          <ToolButtons items="daligned dhoriz dvert dang drad ddia" />
        </Bar>
      </div>
      <div className="flex">
        <Bar first>
          <ToolButtons items="named | vtop vbottom vleft vright vfront vback | isosw isose isone isonw | camera | zoomprev" />
          <Combo label="Named view" value="" width="w-[101px]" />
        </Bar>
        <Bar>
          <ToolButtons items="polysolid boxs wedge cone sphere cyl torus pyramid helix planar | extrude presspull sweep revolve loft | union subtract intersect | orbit swivel align3 array3" />
        </Bar>
      </div>
    </div>
  );
}

function SideBar({ items }: { items: string }) {
  return (
    <div className="flex w-[18px] flex-col items-center bg-[#efefef]">
      <span className="h-[7px] w-full border-y border-[#6a6a6a] bg-[#484848]" />
      {items.split(" ").map((n) => (
        <button key={n} type="button" aria-label={n} className="flex h-[16px] w-full items-center justify-center">
          <Icon name={n} />
        </button>
      ))}
    </div>
  );
}

function Arrow({ dir }: { dir: "up" | "down" | "left" | "right" }) {
  const d = { up: "M1 4.500h5L3.500 2z", down: "M1 2.500h5L3.500 5z", left: "M5 1v5L2 3.500z", right: "M2 1v5l3-2.500z" }[dir];
  return (
    <svg viewBox="0 0 7 7" className="size-[7px] shrink-0" aria-hidden="true">
      <path d={d} fill="#222" />
    </svg>
  );
}

function Drawing() {
  return (
    <section className="mt-[2px] ml-[2px] flex min-w-0 flex-1 flex-col border-2 border-[#8a8a8a] border-r-[#707070]">
      <div className="flex min-h-0 flex-1">
        <div className="flex flex-1 items-end bg-black pb-[4px] pl-[6px]">
          <svg viewBox="0 0 62 66" className="h-[66px] w-[62px]" aria-label="UCS">
            <path d="M4.500 57V26M8 60.500h36" stroke="#d8d8d8" />
            <path d="M1.500 57.500h6v6h-6zM2 22.500l2.500-8 2.500 8zM37 58l8 2.500-8 2.500z" stroke="#d8d8d8" fill="none" />
            <path d="M4.500 57V22" stroke="#d8d8d8" />
            <path d="M2 1l3 4 3-4M5 5v5M53 56l6 8M59 56l-6 8" stroke="#d8d8d8" fill="none" />
          </svg>
        </div>
        <div className="flex w-[12px] shrink-0 flex-col items-center bg-[#efefef] py-[3px]">
          <Arrow dir="up" />
          <span className="mt-[205px] h-[11px] w-[11px] border border-[#9a9a9a] bg-[#e2e2e2]" />
          <span className="flex-1" />
          <Arrow dir="down" />
        </div>
      </div>
      <div className="flex h-[11px] shrink-0 items-center bg-[#efefef] pl-[2px] text-[8px] leading-[11px] text-[#222]">
        {["M2 1v5M6 1v5L3 3.500z", "M5 1v5L2 3.500z", "M2 1v5l3-2.500z", "M1 1v5l3-2.500zM5.500 1v5"].map((d, i) => (
          <button key={i} type="button" aria-label={`Tab scroll ${i + 1}`} className="flex h-full w-[10px] items-center justify-center border-r border-[#b5b5b5]">
            <svg viewBox="0 0 7 7" className="size-[7px]">
              <path d={d} fill="#333" stroke="#333" strokeWidth=".5" />
            </svg>
          </button>
        ))}
        <button type="button" className="h-full bg-black px-[8px] text-[9px] font-bold text-white [clip-path:polygon(0_0,100%_0,88%_100%,12%_100%)]">
          模型
        </button>
        <button type="button" className="ml-[1px] text-[9px]">
          布局1
        </button>
        <Slash />
        <button type="button" className="text-[9px]">
          布局2
        </button>
        <Slash />
        <span className="flex-1" />
        <div className="flex h-full w-[322px] items-center border-l border-[#bbb]">
          <span className="mr-[3px] h-full w-[4px] border-r border-[#bbb] bg-white" />
          <Arrow dir="left" />
          <span className="flex-1" />
          <Arrow dir="right" />
          <span className="w-[16px]" />
        </div>
      </div>
    </section>
  );
}

function Slash() {
  return (
    <svg viewBox="0 0 11 11" className="h-[11px] w-[11px]" aria-hidden="true">
      <path d="M3 11L8 0" stroke="#444" />
    </svg>
  );
}

const RADIO =
  "size-[9px] shrink-0 appearance-none rounded-full border border-[#9a9c9e] bg-[#e9eaeb] checked:border-[#5f7684] checked:bg-[radial-gradient(circle,#17465f_35%,#a8d4e8_60%)] disabled:border-[#c5c5c5]";
const BTN = "flex items-center justify-center border border-[#8a8a8a] bg-linear-to-b from-[#f5f5f5] to-[#d3d3d3]";

function Radio({ name, text, k, ...rest }: { name: string; text: string; k: string; defaultChecked?: boolean; disabled?: boolean }) {
  return (
    <label className={`flex h-[13px] shrink-0 items-center gap-[3px] leading-[13px] ${rest.disabled ? "text-[#9b9b9b]" : ""}`}>
      <input type="radio" name={name} className={RADIO} {...rest} />
      <span>
        {text}(<u>{k}</u>){rest.disabled ? ":" : ""}
      </span>
    </label>
  );
}

function WriteBlockDialog() {
  return (
    <div
      role="dialog"
      aria-label="写块"
      className="absolute top-[1px] left-[348px] z-10 w-[305px] rounded-[5px] border border-[#2c2621] bg-[linear-gradient(180deg,#6f655d_0%,#8b837c_28%,#3e342d_32%,#54483f_100%)] px-[3px] pb-[3px] shadow-[inset_0_0_0_1px_#a59b91]"
    >
      <div className="-mx-[2px] flex h-[19px] items-start rounded-t-[4px] bg-[linear-gradient(90deg,#b3aea8_0%,#9c958e_14%,#625349_32%,#4d3e35_50%,#6b5c52_75%,#4c3f37_100%)] pl-[3px]">
        <span className="mt-[3px] flex h-[12px] w-[12px] items-center justify-center overflow-hidden bg-[#f3e9e9] text-[8px] font-bold text-[#d01822]">Aa</span>
        <h2 className="mt-[2px] ml-[3px] flex-1 text-[9px] leading-[14px] text-black [text-shadow:0_0_4px_#fff]">写块</h2>
        <button type="button" aria-label="Close dialog" className="mr-[3px] flex h-[13px] w-[34px] items-center justify-center rounded-b-[3px] border border-t-0 border-[#e7b0a4] bg-linear-to-b from-[#d97a68] to-[#b42a14]">
          <svg viewBox="0 0 9 9" className="size-[7px]">
            <path d="M1.500 1.500l6 6M7.500 1.500l-6 6" stroke="#fff" strokeWidth="2.200" />
          </svg>
        </button>
      </div>
      <form className="bg-[#f0f0f0] px-[5px] pt-[8px] pb-[7px] text-[9px] text-[#1a1a1a]" onSubmit={(e) => e.preventDefault()}>
        <fieldset className="border border-[#dedede] pb-[7px] pl-[5px]">
          <legend className="px-[1px] text-[9px] leading-[12px]">源</legend>
          <div className="flex h-[13px] items-center">
            <span className="w-[64px] shrink-0">
              <Radio name="src" text="块" k="B" disabled />
            </span>
            <span className="flex h-[15px] w-[208px] shrink-0 items-center border border-[#c4c4c4] bg-[#f4f4f4]">
              <select aria-label="块" disabled className="h-full flex-1 appearance-none" />
              <Caret />
            </span>
          </div>
          <Radio name="src" text="整个图形" k="E" />
          <Radio name="src" text="对象" k="O" defaultChecked />
          <div className="mt-[2px] flex gap-[7px]">
            <fieldset className="h-[96px] w-[117px] border border-[#dedede] px-[4px] pt-[3px]">
              <legend className="px-[1px] text-[9px] leading-[12px]">基点</legend>
              <div className="flex items-center gap-[3px]">
                <button type="button" aria-label="拾取点" className={`${BTN} size-[19px]`}>
                  <Icon name="pick" />
                </button>
                <span>
                  拾取点(<u>K</u>)
                </span>
              </div>
              <div className="mt-[5px] flex flex-col gap-[4px] pl-[3px]">
                {["X", "Y", "Z"].map((a) => (
                  <label key={a} className="flex h-[13px] items-center">
                    <span className="w-[13px]">
                      <u>{a}</u>:
                    </span>
                    <input defaultValue="0" className="h-[13px] w-[84px] border border-t-[#a5a5a5] border-r-[#e3e3e3] border-b-[#e3e3e3] border-l-[#e3e3e3] bg-white pl-[2px] leading-[11px]" />
                  </label>
                ))}
              </div>
            </fieldset>
            <fieldset className="h-[96px] w-[150px] border border-[#dedede] pt-[3px] pr-[6px] pl-[4px]">
              <legend className="text-[9px] leading-[12px]">对象</legend>
              <div className="flex items-center gap-[3px]">
                <button type="button" aria-label="选择对象" className={`${BTN} size-[19px]`}>
                  <Icon name="select" />
                </button>
                <span className="flex-1">
                  选择对象(<u>T</u>)
                </span>
                <button type="button" aria-label="快速选择" className={`${BTN} size-[19px]`}>
                  <Icon name="quick" />
                </button>
              </div>
              <div className="mt-[3px] flex flex-col">
                <Radio name="obj" text="保留" k="R" />
                <Radio name="obj" text="转换为块" k="C" defaultChecked />
                <Radio name="obj" text="从图形中删除" k="D" />
              </div>
              <p className="mt-[3px] flex items-center gap-[3px] leading-[13px]">
                <svg viewBox="0 0 12 12" className="size-[12px]" aria-hidden="true">
                  <path d="M6 1l5.500 10H.5z" fill="#ffe500" stroke="#7d7100" strokeLinejoin="round" />
                  <path d="M6 4v4M6 9v1.200" stroke="#111" strokeWidth="1.400" />
                </svg>
                未选定对象
              </p>
            </fieldset>
          </div>
        </fieldset>
        <fieldset className="mt-[5px] border border-[#dedede] px-[8px] pb-[6px]">
          <legend className="-ml-[3px] px-[1px] text-[9px] leading-[12px]">目标</legend>
          <label htmlFor="path" className="mt-[6px] block leading-[12px]">
            文件名和路径(<u>F</u>):
          </label>
          <div className="mt-[8px] flex items-center gap-[4px]">
            <span className="flex h-[15px] w-[249px] items-center border border-[#9ab8cf] bg-white pl-[2px]">
              <input id="path" defaultValue={"D:\\Documents\\新块"} className={`h-[11px] w-[79px] bg-[#3492f0] text-[8px] leading-[11px] text-white ${MONO}`} />
              <span className="flex-1" />
              <Caret dark />
            </span>
            <button type="button" className={`${BTN} h-[14px] w-[19px] leading-[8px] text-[#555]`}>
              ...
            </button>
          </div>
          <div className="mt-[7px] flex items-center">
            <label htmlFor="unit" className="w-[61px]">
              插入单位(<u>U</u>):
            </label>
            <span className="flex h-[15px] w-[188px] items-center border border-[#8a8a8a] bg-linear-to-b from-[#f0f0f0] to-[#d4d4d4]">
              <select id="unit" className="h-full flex-1 appearance-none bg-transparent pl-[2px] leading-[13px]">
                <option>毫米</option>
              </select>
              <Caret dark />
            </span>
          </div>
        </fieldset>
        <div className="mt-[11px] flex justify-end gap-[6px] pr-[2px]">
          <button type="submit" className="h-[15px] w-[54px] rounded-[2px] border border-[#3f9cc0] bg-linear-to-b from-[#eef5f8] to-[#cfdde4] leading-[13px] shadow-[inset_0_0_0_1px_#9ddcf0]">
            确定
          </button>
          <button type="button" className={`${BTN} h-[15px] w-[54px] rounded-[2px]`}>
            取消
          </button>
          <button type="button" className={`${BTN} h-[15px] w-[54px] rounded-[2px]`}>
            帮助(<u>H</u>)
          </button>
        </div>
      </form>
      <svg viewBox="0 0 305 310" className="pointer-events-none absolute top-0 left-0 h-[310px] w-[305px] text-[#f01418]" aria-hidden="true">
        <g stroke="currentColor" strokeWidth="1.600" fill="currentColor">
          <path d="M8 121l9-7M131 150l7-6M194 125l-23-15" />
          <path d="M23 109l-10 3 6 6zM143 139l-10 3 6 6zM166 106l5 10 6-8z" stroke="none" />
        </g>
      </svg>
      <span className="absolute top-[131px] left-[1px] text-[12px] leading-[16px] text-[#f0303a]">3</span>
      <span className="absolute top-[154px] left-[119px] text-[12px] leading-[16px] text-[#f0303a]">1</span>
      <span className="absolute top-[129px] left-[201px] text-[12px] leading-[16px] text-[#f0303a]">2</span>
    </div>
  );
}

function CommandLine() {
  return (
    <section className={`flex h-[43px] shrink-0 bg-white text-[11px] text-[#26263a] ${MONO}`}>
      <span className="flex w-[11px] shrink-0 justify-center bg-[#a2a2a2] pt-[2px]">
        <span className="h-[2px] w-[8px] bg-[#777]" />
      </span>
      <div className="flex min-w-0 flex-1 flex-col">
        <div className="flex h-[30px] border-b border-[#b4b4b4]">
          <div className="flex-1 pl-[2px] leading-[12px]">
            <p>指定起点:</p>
            <p>命令: W</p>
          </div>
          <div className="flex w-[12px] flex-col items-center justify-between bg-[#efefef] py-[4px]">
            <Arrow dir="up" />
            <Arrow dir="down" />
          </div>
        </div>
        <div className="flex flex-1">
          <input aria-label="Command" className="min-w-0 flex-1 bg-white" />
          <div className="flex w-[56px] items-center gap-[16px] bg-[#efefef] pl-[8px]">
            <span className="h-[9px] w-[11px] border border-[#aaa] bg-[#e0e0e0]" />
            <Arrow dir="right" />
          </div>
        </div>
      </div>
    </section>
  );
}

function StatusBar() {
  const on = ["ortho", "osnap", "dyn"];
  const cell = "flex h-full w-[16px] shrink-0 items-center justify-center border-r border-[#777]";
  return (
    <footer className="flex h-[16px] shrink-0 items-center border-t border-[#444] bg-linear-to-b from-[#838383] to-[#a2a2a2] pl-[8px] text-[9px] text-[#1d1d1d]">
      <span className="w-[151px] shrink-0 font-['Liberation_Sans',sans-serif]">3022.5232, 1102.0153, 0.0000</span>
      {["snap", "grid", "ortho", "polar", "osnap", "otrack", "ducs", "dyn", "lwt", "qp"].map((n) => (
        <button key={n} type="button" aria-label={n} className={`${cell} ${on.includes(n) ? "bg-linear-to-b from-[#e6f6fb] to-[#8ccbdd]" : "bg-[#b5b5b5]"}`}>
          <Icon name={n} className="size-[13px]" />
        </button>
      ))}
      <span className="flex-1" />
      <div className="flex h-full w-[345px] shrink-0 items-center">
        <button type="button" className="h-full w-[24px] border-r border-[#777] bg-[#b0b0b0] text-[9px] leading-[14px]">
          模型
        </button>
        {["layout", "quickview"].map((n) => (
          <button key={n} type="button" aria-label={n} className={`${cell} bg-[#b5b5b5]`}>
            <Icon name={n} className="size-[13px]" />
          </button>
        ))}
        <span className="w-[12px]" />
        {["pan", "zoom", "wheel", "motion"].map((n) => (
          <button key={n} type="button" aria-label={n} className={`${cell} bg-[#b0b0b0]`}>
            <Icon name={n} className="size-[13px]" />
          </button>
        ))}
        <span className="w-[13px]" />
        <button type="button" className="flex h-full items-center gap-[3px] border-r border-[#777] bg-[#a8a8a8]">
          <Icon name="anno" className="size-[13px]" />
          1:1
          <Caret dark />
        </button>
        <button type="button" aria-label="annov" className={`${cell} bg-[#b5b5b5]`}>
          <Icon name="annov" className="size-[13px]" />
        </button>
      </div>
    </footer>
  );
}

function ImeBar() {
  return (
    <div className="absolute right-[1px] bottom-[1px] z-10 flex h-[20px] w-[140px] items-center justify-between rounded-[5px] border border-[#d5d8dc] bg-[#f7f8fa] pr-[12px] pl-[9px]">
      <svg viewBox="0 0 20 18" className="h-[18px] w-[20px]" aria-hidden="true">
        <path d="M17 4C10-1 3 2 4 6c1 4 11 2 11 6 0 3-7 4-12 0" fill="none" stroke="#e9683c" strokeWidth="3.200" />
      </svg>
      <span className="pl-[7px] font-['Liberation_Sans',sans-serif] text-[13px] leading-[16px] font-bold text-[#3d85d1]">A</span>
      <svg viewBox="0 0 12 12" className="size-[12px]" aria-hidden="true">
        <path d="M8 0c6 7-1 14-8 9 5 0 9-3 8-9z" fill="#3d85d1" />
      </svg>
      <svg viewBox="0 0 8 12" className="h-[11px] w-[8px]" aria-hidden="true">
        <path d="M1 4h1.500" stroke="#3d85d1" strokeWidth="1.500" />
        <path d="M6 7v2l-1 2" stroke="#3d85d1" strokeWidth="1.500" fill="none" />
      </svg>
      <svg viewBox="0 0 14 10" className="h-[9px] w-[13px]" aria-hidden="true">
        <path d="M0 0h14v10H0z" fill="#3d85d1" />
        <path d="M1.500 2.500h11M1.500 5h11M3 7.500h8" stroke="#d9e9f8" strokeDasharray="1.500 1" />
      </svg>
      <svg viewBox="0 0 10 12" className="h-[11px] w-[9px]" aria-hidden="true">
        <circle cx="5" cy="3" r="2.600" fill="#8a8d91" />
        <path d="M1 12V9c0-4 8-4 8 0v3z" fill="#8a8d91" />
      </svg>
      <svg viewBox="0 0 12 12" className="size-[11px]" aria-hidden="true">
        <path d="M1.500 10.500l5-5" stroke="#3d85d1" strokeWidth="2.400" strokeLinecap="round" />
        <path d="M11 3.500L9 5 7.500 3.500 9 1C6 .5 4.500 3 6 5.500S11 7 11 3.500z" fill="#3d85d1" />
      </svg>
    </div>
  );
}

function Watermark() {
  return (
    <div className="absolute right-[55px] bottom-[14px] z-20 flex h-[85px] w-[180px] items-center bg-[#212e55] pl-[14px] text-[#cfd2da]">
      <svg viewBox="0 0 36 36" className="h-[36px] w-[36px] shrink-0" aria-hidden="true">
        <g fill="none" stroke="currentColor" strokeLinecap="round" strokeLinejoin="round">
          <path d="M9 26V5c0-3 3-3 5-2l17 10c4 2 4 6 0 8L14 33c-2 1-4 1-6 0" strokeWidth="2.400" />
          <path d="M3 6v21c0 4 3 6 7 6 2 0 3-1 3-3V13" strokeWidth="2.200" />
        </g>
        <path d="M15 13l8 5-8 5z" fill="currentColor" />
        <path d="M24.500 14.500v7" stroke="currentColor" strokeWidth="1.200" />
      </svg>
      <div className="ml-[12px]">
        <div className="flex gap-[3px] font-['Liberation_Sans','Noto_Sans_CJK_SC',sans-serif] text-[24px] leading-[28px] font-bold">
          {["溜", "溜", "自", "学"].map((c, i) => (
            <span key={i}>{c}</span>
          ))}
        </div>
        <div className="font-['Inter',sans-serif] text-[13px] leading-[16px]">zixue.3D66.COM</div>
      </div>
      <svg viewBox="0 0 30 8" className="absolute -top-[7px] left-[76px] h-[7px] w-[30px]" aria-hidden="true">
        <path d="M1 8c0-10 12-10 12 0zM17 8c0-8 12-8 12 0z" fill="#b8b8b8" />
      </svg>
    </div>
  );
}

export default function App() {
  return (
    <div className="relative flex min-h-screen w-full flex-col overflow-hidden bg-[#636363] font-['Noto_Sans','Noto_Sans_CJK_SC',sans-serif]">
      <Header />
      <Toolbars />
      <main className="relative flex flex-1 items-stretch pb-[2px]">
        <div className="shrink-0 pt-[2px]">
          <SideBar items="line xline pline polygon rect arc circle cloud spline ellipse earc insert mkblock point hatch gradient region table text" />
        </div>
        <Drawing />
        <div className="flex shrink-0 flex-col gap-[2px] pt-[3px] pr-[2px] pl-[3px]">
          <SideBar items="erase copy mirror offset array move rotate scale stretch trim extend breakpt breakat join chamfer fillet explode" />
          <SideBar items="front back above under" />
        </div>
        <WriteBlockDialog />
      </main>
      <CommandLine />
      <StatusBar />
      <ImeBar />
      <Watermark />
    </div>
  );
}
